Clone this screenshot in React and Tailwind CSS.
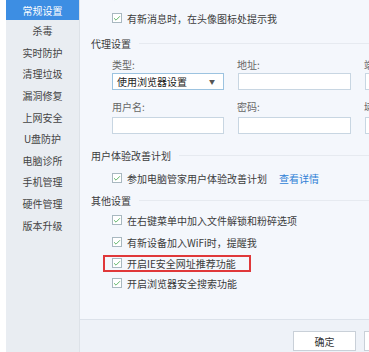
import { Check } from "lucide-react";

const navItems = ["杀毒", "实时防护", "清理垃圾", "漏洞修复", "上网安全", "U盘防护", "电脑诊所", "手机管理", "硬件管理", "版本升级"];

function Box() {
  return (
    <span className="flex h-[10px] w-[10px] shrink-0 items-center justify-center border border-[#a8b8c0] bg-white">
      <Check size={9} strokeWidth={2.5} className="text-[#45a84f]" />
    </span>
  );
}

function CheckRow({ children, className = "" }) {
  return (
    <div className={`relative ml-[32px] flex h-[20px] items-center gap-[5px] ${className}`}>
      <Box />
      <span className="whitespace-nowrap">{children}</span>
    </div>
  );
}

function Heading({ children, className = "" }) {
  return (
    <div className={`flex h-[16px] items-center gap-[8px] pl-[11px] ${className}`}>
      <span className="shrink-0">{children}</span>
      <span className="h-px flex-1 bg-[#e6eaf0]" />
    </div>
  );
}

export default function App() {
  return (
    <div className="flex h-[352px] w-[369px] overflow-hidden bg-white font-['Noto_Sans_CJK_SC','Noto_Sans',sans-serif] text-[10px] text-[#3c3c3c]">
      <div className="w-[6px] shrink-0 bg-white" />

      {/* sidebar */}
      <nav className="flex w-[74px] shrink-0 flex-col border-r border-[#dde2e8] bg-[#e9edf2]">
        <div className="flex h-[20px] items-center justify-center bg-[#3d8ee3] text-white">常规设置</div>
        {navItems.map((item) => (
          <div key={item} className="flex h-[21.6px] items-center justify-center text-[#444]">
            {item}
          </div>
        ))}
      </nav>

      {/* content */}
      <div className="flex min-w-0 flex-1 flex-col bg-[#f4f7fc]">
        <div className="flex-1 overflow-hidden">
          <Heading className="mt-[-14px]">消息提醒</Heading>
          <CheckRow className="mt-[6px]">有新消息时，在头像图标处提示我</CheckRow>

          <Heading className="mt-[7px]">代理设置</Heading>
          <div className="ml-[32px] mt-[5px] flex h-[16px] items-center whitespace-nowrap text-[#666]">
            <span className="w-[125px] shrink-0">类型:</span>
            <span className="w-[127px] shrink-0">地址:</span>
            <span className="shrink-0">端口:</span>
          </div>
          <div className="ml-[32px] mt-[1px] flex h-[17px] gap-[14px]">
            <div className="flex w-[112px] shrink-0 items-center justify-between border border-[#9cc3e0] bg-white pl-[4px] pr-[8px]">
              <span className="text-[#222]">使用浏览器设置</span>
              <span className="text-[6px] text-[#555]">▼</span>
            </div>
            <div className="w-[113px] shrink-0 border border-[#c8d6e2] bg-white" />
            <div className="w-[60px] shrink-0 border border-[#c8d6e2] bg-white" />
          </div>
          <div className="ml-[32px] mt-[8px] flex h-[16px] items-center whitespace-nowrap text-[#666]">
            <span className="w-[125px] shrink-0">用户名:</span>
            <span className="w-[127px] shrink-0">密码:</span>
            <span className="shrink-0">域:</span>
          </div>
          <div className="ml-[32px] mt-[3px] flex h-[17px] gap-[14px]">
            <div className="w-[112px] shrink-0 border border-[#c8d6e2] bg-white" />
            <div className="w-[113px] shrink-0 border border-[#c8d6e2] bg-white" />
            <div className="w-[60px] shrink-0 border border-[#c8d6e2] bg-white" />
          </div>

          <Heading className="mt-[13px]">用户体验改善计划</Heading>
          <CheckRow className="mt-[5px]">
            参加电脑管家用户体验改善计划
            <span className="ml-[12px] text-[#2f7fd6]">查看详情</span>
          </CheckRow>

          <Heading className="mt-[4px]">其他设置</Heading>
          <CheckRow className="mt-[2px]">在右键菜单中加入文件解锁和粉碎选项</CheckRow>
          <CheckRow className="mt-[2px]">有新设备加入WiFi时，提醒我</CheckRow>
          <CheckRow className="mt-[1px]">
            开启IE安全网址推荐功能
            <span className="pointer-events-none absolute left-[-9px] top-[2px] h-[17px] w-[148px] border-2 border-[#e0383a]" />
          </CheckRow>
          <CheckRow>开启浏览器安全搜索功能</CheckRow>
        </div>

        {/* footer */}
        <div className="flex h-[33px] shrink-0 items-start gap-[8px] border-t border-[#dce2ea] bg-[#eef2f8] pl-[213px] pt-[11px]">
          <button className="flex h-[20px] w-[63px] shrink-0 items-center justify-center border border-[#c9d0d8] bg-white text-[#333]">
            确定
          </button>
          <button className="flex h-[20px] w-[63px] shrink-0 items-center justify-center border border-[#c9d0d8] bg-white text-[#333]">
            取消
          </button>
        </div>
      </div>
    </div>
  );
}
